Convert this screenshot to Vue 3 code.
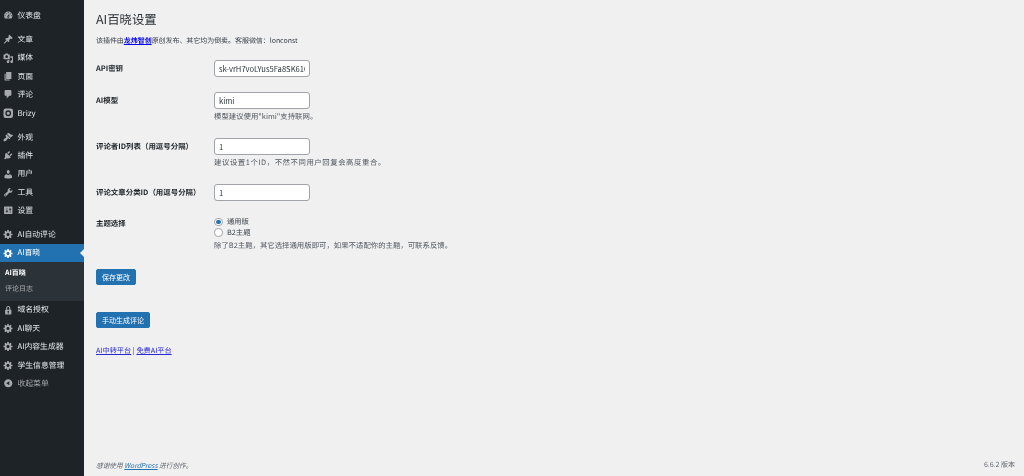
<script setup>
const ICONS = {
  dash: 'M3.76 16h12.48c1.1-1.37 1.76-3.11 1.76-5 0-4.42-3.58-8-8-8s-8 3.58-8 8c0 1.89.66 3.63 1.76 5zM10 4c.55 0 1 .45 1 1s-.45 1-1 1-1-.45-1-1 .45-1 1-1zM6 6c.55 0 1 .45 1 1s-.45 1-1 1-1-.45-1-1 .45-1 1-1zm8 0c.55 0 1 .45 1 1s-.45 1-1 1-1-.45-1-1 .45-1 1-1zm-5.37 5.55L12 7v6c0 1.1-.9 2-2 2s-2-.9-2-2c0-.57.24-1.08.63-1.45zM4 10c.55 0 1 .45 1 1s-.45 1-1 1-1-.45-1-1 .45-1 1-1zm12 0c.55 0 1 .45 1 1s-.45 1-1 1-1-.45-1-1 .45-1 1-1zm-5 3c0-.55-.45-1-1-1s-1 .45-1 1 .45 1 1 1 1-.45 1-1z',
  pin: 'M10.44 3.02l1.82-1.82 6.36 6.35-1.83 1.82c-1.05-.68-2.48-.57-3.41.36l-.75.75c-.92.93-1.04 2.35-.35 3.41l-1.83 1.82-2.41-2.41-2.8 2.79c-.42.42-3.38 2.71-3.8 2.29s1.86-3.39 2.28-3.81l2.79-2.79L4.1 9.36l1.83-1.82c1.05.69 2.48.57 3.4-.36l.75-.75c.93-.92 1.05-2.35.36-3.41z',
  media: 'M13 11V4c0-.55-.45-1-1-1h-1.67L9 1H5L3.67 3H2c-.55 0-1 .45-1 1v7c0 .55.45 1 1 1h10c.55 0 1-.45 1-1zM7 4.5c1.38 0 2.5 1.12 2.5 2.5S8.38 9.5 7 9.5 4.5 8.38 4.5 7 5.62 4.5 7 4.5zM14 6h5v10.5c0 1.38-1.12 2.5-2.5 2.5S14 17.88 14 16.5s1.12-2.5 2.5-2.5c.17 0 .34.02.5.05V9h-3V6zm-4 8.05V13h2v3.5c0 1.38-1.12 2.5-2.5 2.5S7 17.88 7 16.5 8.12 14 9.5 14c.17 0 .34.02.5.05z',
  page: 'M6 15V2h10v13H6zm-1 1h8v2H3V5h2v11z',
  comment: 'M5 2h9c1.1 0 2 .9 2 2v7c0 1.1-.9 2-2 2h-2l-5 5v-5H5c-1.1 0-2-.9-2-2V4c0-1.1.9-2 2-2z',
  brizy: 'M5 1h10a4 4 0 0 1 4 4v10a4 4 0 0 1-4 4H5a4 4 0 0 1-4-4V5a4 4 0 0 1 4-4zm5 3.5a5.5 5.5 0 1 0 0 11 5.5 5.5 0 0 0 0-11zM10 7a3 3 0 1 1 0 6 3 3 0 0 1 0-6z',
  brush: 'M14.48 11.06L7.41 3.99l1.5-1.5c.5-.56 2.3-.47 3.51.32 1.21.8 1.43 1.28 2.91 2.1 1.18.64 2.45 1.26 4.45.85zm-.71.71L6.7 4.7 4.93 6.47c-.39.39-.39 1.02 0 1.41l1.06 1.06c.39.39.39 1.03 0 1.42-.6.6-1.43 1.11-2.21 1.69-.35.26-.7.53-1.01.84C1.43 13.23.2 15.78 1.5 17.08s3.85-.14 5.19-1.48c.31-.31.58-.66.84-1.01.58-.78 1.09-1.61 1.69-2.21.39-.39 1.03-.39 1.42 0l1.06 1.06c.39.39 1.02.39 1.41 0z',
  plugin: 'M13.11 4.36L9.87 7.6 8 5.73l3.24-3.24c.35-.34 1.05-.2 1.56.32.52.51.66 1.21.31 1.55zm-8 1.77l.91-1.12 9.01 9.01-1.19.84c-.71.71-2.63 1.16-3.82 1.16H6.14L4.9 17.26c-.59.59-1.54.59-2.12 0-.59-.58-.59-1.53 0-2.12l1.24-1.24v-3.88c0-1.13.4-3.19 1.09-3.89zm7.26 3.97l3.24-3.24c.34-.35 1.04-.21 1.55.31.52.51.66 1.21.31 1.55l-3.24 3.25z',
  user: 'M10 9.25c-2.27 0-2.73-3.44-2.73-3.44C7 4.02 7.82 2 9.97 2c2.16 0 2.98 2.02 2.71 3.81 0 0-.41 3.44-2.68 3.44zm0 2.57L12.72 10c2.39 0 4.52 2.33 4.52 4.53v2.49s-3.65 1.13-7.24 1.13c-3.65 0-7.24-1.13-7.24-1.13v-2.49c0-2.25 1.94-4.48 4.47-4.48z',
  tool: 'M16.68 9.77c-1.34 1.34-3.3 1.67-4.95.99l-5.41 6.52c-.99.99-2.59.99-3.58 0s-.99-2.59 0-3.57l6.52-5.42c-.68-1.65-.35-3.61.99-4.95 1.28-1.28 3.12-1.62 4.72-1.06l-2.89 2.89 2.82 2.82 2.86-2.87c.53 1.58.18 3.39-1.08 4.65zM3.81 16.21c.4.39 1.04.39 1.43 0 .4-.4.4-1.04 0-1.43-.39-.4-1.03-.4-1.43 0-.39.39-.39 1.03 0 1.43z',
  settings: 'M18 16V4c0-.55-.45-1-1-1H3c-.55 0-1 .45-1 1v12c0 .55.45 1 1 1h14c.55 0 1-.45 1-1zM8 11h1c.55 0 1 .45 1 1s-.45 1-1 1H8v1.5c0 .28-.22.5-.5.5s-.5-.22-.5-.5V13H6c-.55 0-1-.45-1-1s.45-1 1-1h1V5.5c0-.28.22-.5.5-.5s.5.22.5.5V11zm5-2h-1c-.55 0-1-.45-1-1s.45-1 1-1h1V5.5c0-.28.22-.5.5-.5s.5.22.5.5V7h1c.55 0 1 .45 1 1s-.45 1-1 1h-1v5.5c0 .28-.22.5-.5.5s-.5-.22-.5-.5V9z',
  gear: 'M18 12h-2.18c-.17.7-.44 1.35-.81 1.93l1.54 1.54-2.1 2.1-1.54-1.54c-.58.36-1.23.63-1.91.79V19H8v-2.18c-.68-.16-1.33-.43-1.91-.79l-1.54 1.54-2.12-2.12 1.54-1.54c-.36-.58-.63-1.23-.79-1.91H1V9.03h2.17c.16-.7.44-1.35.8-1.94L2.43 5.55l2.1-2.1 1.54 1.54c.58-.37 1.24-.64 1.93-.81V2h3v2.18c.68.16 1.33.43 1.91.79l1.54-1.54 2.12 2.12-1.54 1.54c.36.59.64 1.24.8 1.94H18V12zm-8.5 1.5c1.66 0 3-1.34 3-3s-1.34-3-3-3-3 1.34-3 3 1.34 3 3 3z',
  lock: 'M14 9h1c.55 0 1 .45 1 1v7c0 .55-.45 1-1 1H5c-.55 0-1-.45-1-1v-7c0-.55.45-1 1-1h1V6c0-2.21 1.79-4 4-4s4 1.79 4 4v3zm-2 0V6c0-1.1-.9-2-2-2s-2 .9-2 2v3h4zm-1 7l-.36-2.15c.51-.24.86-.75.86-1.35 0-.83-.67-1.5-1.5-1.5s-1.5.67-1.5 1.5c0 .6.35 1.11.86 1.35L9 16h2z',
  collapse: 'M10 2.16c4.33 0 7.84 3.51 7.84 7.84s-3.51 7.84-7.84 7.84S2.16 14.33 2.16 10 5.71 2.16 10 2.16zm2 11.72V6.12L6.18 9.97z'
}
const menuTop = [
  { t: '仪表盘', i: 'dash' },
  { t: '文章', i: 'pin', gap: true },
  { t: '媒体', i: 'media' },
  { t: '页面', i: 'page' },
  { t: '评论', i: 'comment' },
  { t: 'Brizy', i: 'brizy' },
  { t: '外观', i: 'brush', gap: true },
  { t: '插件', i: 'plugin' },
  { t: '用户', i: 'user' },
  { t: '工具', i: 'tool' },
  { t: '设置', i: 'settings' },
  { t: 'AI自动评论', i: 'gear', gap: true },
  { t: 'AI百晓', i: 'gear', current: true }
]
const menuBottom = [
  { t: '域名授权', i: 'lock' },
  { t: 'AI聊天', i: 'gear' },
  { t: 'AI内容生成器', i: 'gear' },
  { t: '学生信息管理', i: 'gear' },
  { t: '收起菜单', i: 'collapse', dim: true }
]
</script>

<template>
  <div class="page">
    <aside class="side">
      <div v-for="m in menuTop" :key="m.t" class="item" :class="{ gap: m.gap, current: m.current }">
        <svg class="ico" viewBox="0 0 20 20"><path fill-rule="evenodd" :d="ICONS[m.i]" /></svg>
        <span>{{ m.t }}</span>
      </div>
      <div class="sub">
        <div class="sub-item on">AI百晓</div>
        <div class="sub-item">评论日志</div>
      </div>
      <div v-for="m in menuBottom" :key="m.t" class="item" :class="{ dim: m.dim }">
        <svg class="ico" viewBox="0 0 20 20"><path fill-rule="evenodd" :d="ICONS[m.i]" /></svg>
        <span>{{ m.t }}</span>
      </div>
    </aside>

    <main class="main">
      <h1 class="title">AI百晓设置</h1>
      <p class="intro">该插件由<a class="strong-link" href="#">龙炜智创</a>原创发布、其它均为倒卖。客服微信：lonconst</p>

      <div class="row row-api">
        <label class="lab">API密钥</label>
        <div class="field"><input class="inp" value="sk-vrH7voLYus5Fa8SK610S3D" readonly /></div>
      </div>
      <div class="row row-model">
        <label class="lab">AI模型</label>
        <div class="field">
          <input class="inp" value="kimi" readonly />
          <p class="desc">模型建议使用"kimi"支持联网。</p>
        </div>
      </div>
      <div class="row row-ids">
        <label class="lab">评论者ID列表（用逗号分隔）</label>
        <div class="field">
          <input class="inp" value="1" readonly />
          <p class="desc desc-ids">建议设置1个ID，不然不同用户回复会高度重合。</p>
        </div>
      </div>
      <div class="row row-cat">
        <label class="lab">评论文章分类ID（用逗号分隔）</label>
        <div class="field"><input class="inp" value="1" readonly /></div>
      </div>
      <div class="row row-theme">
        <label class="lab">主题选择</label>
        <div class="field">
          <div class="radio-line"><span class="radio checked"></span>通用版</div>
          <div class="radio-line"><span class="radio"></span>B2主题</div>
          <p class="desc">除了B2主题，其它选择通用版即可，如果不适配你的主题，可联系反馈。</p>
        </div>
      </div>

      <button class="btn btn-save">保存更改</button>
      <button class="btn btn-gen">手动生成评论</button>

      <p class="links"><a href="#">AI中转平台</a> | <a href="#">免费AI平台</a></p>

      <footer class="foot">
        <span class="thanks">感谢使用 <a href="#">WordPress</a> 进行创作。</span>
        <span>6.6.2 版本</span>
      </footer>
    </main>
  </div>
</template>

<style>
html, body { margin: 0; background: #f0f0f1; }
</style>

<style scoped>
.page {
  display: flex;
  height: 476px;
  overflow: hidden;
  font-family: "Noto Sans CJK SC", "Liberation Sans", sans-serif;
  font-size: 7px;
  color: #3c434a;
  background: #f0f0f1;
  text-rendering: geometricPrecision;
  filter: blur(0.2px);
}
.side {
  width: 84px;
  flex: none;
  background: #1d2327;
  padding-top: 6.3px;
  box-sizing: border-box;
}
.item {
  position: relative;
  display: flex;
  align-items: center;
  height: 18.4px;
  color: #e4e9ee;
  font-size: 7.8px;
}
.item.gap { margin-top: 5.6px; }
.item.dim { color: #a7aaad; }
.ico {
  width: 10.5px;
  height: 10.5px;
  margin: 0 4px 0 3px;
  fill: #a7aaad;
  flex: none;
}
.item.current {
  background: #2271b1;
  color: #fff;
}
.item.current .ico { fill: #fff; }
.item.current::after {
  content: "";
  position: absolute;
  right: 0;
  top: 50%;
  margin-top: -4px;
  border: 4px solid transparent;
  border-right-color: #f0f0f1;
  border-left-width: 0;
}
.sub {
  background: #2c3338;
  padding: 4px 0 3.5px;
}
.sub-item {
  height: 15.5px;
  line-height: 15.5px;
  padding-left: 5px;
  color: #a7aaad;
}
.sub-item.on { color: #fff; font-weight: 700; }
.main {
  flex: 1;
  min-width: 0;
  display: flex;
  flex-direction: column;
  align-items: flex-start;
  padding: 0 9px 0 12px;
}
.title {
  margin: 11px 0 0;
  font-size: 12.4px;
  line-height: 16px;
  font-weight: 400;
  color: #2c3338;
}
.intro {
  margin: 7.5px 0 0;
  line-height: 12px;
  letter-spacing: -0.05px;
}
.strong-link { color: #0000ee; font-weight: 700; text-decoration: underline; }
.row { display: flex; align-items: flex-start; }
.row-api { margin-top: 13.5px; }
.row-model { margin-top: 15.5px; }
.row-ids { margin-top: 15.5px; }
.row-cat { margin-top: 15.5px; }
.row-theme { margin-top: 16.5px; }
.lab {
  width: 118px;
  flex: none;
  font-size: 7.45px;
  font-weight: 700;
  color: #1d2327;
  line-height: 12px;
  padding-top: 2.5px;
}
.row-theme .lab { padding-top: 1px; }
.inp {
  display: block;
  width: 95.5px;
  height: 16.5px;
  box-sizing: border-box;
  padding: 0 4px;
  border: 1px solid #a0a3a8;
  border-radius: 3px;
  background: #fff;
  color: #2c3338;
  font: inherit;
  font-size: 7.6px;
  outline: none;
}
.desc {
  margin: 2px 0 0;
  font-size: 7.4px;
  line-height: 12px;
  color: #50575e;
  white-space: nowrap;
}
.desc-ids { letter-spacing: 0.55px; }
.radio-line {
  display: flex;
  align-items: center;
  height: 10.4px;
  font-size: 7.3px;
  color: #3c434a;
}
.radio {
  width: 8.5px;
  height: 8.5px;
  margin-right: 4.5px;
  box-sizing: border-box;
  border: 1px solid #a0a3a8;
  border-radius: 50%;
  background: #fff;
  display: flex;
  align-items: center;
  justify-content: center;
}
.radio.checked::before {
  content: "";
  width: 4.5px;
  height: 4.5px;
  border-radius: 50%;
  background: #2271b1;
}
.btn {
  height: 16.5px;
  padding: 0 5px;
  border: 1px solid #2271b1;
  border-radius: 2px;
  background: #2271b1;
  color: #fff;
  font: inherit;
  line-height: 14.5px;
}
.btn-save { margin-top: 17px; }
.btn-gen { margin-top: 26.5px; }
.links {
  margin: 17px 0 0;
  font-size: 7.2px;
  line-height: 12px;
  color: #3c434a;
}
.links a { color: #2a2ad0; text-decoration: underline; }
.foot {
  margin-top: auto;
  align-self: stretch;
  display: flex;
  justify-content: space-between;
  padding-bottom: 5px;
  line-height: 12px;
  color: #646970;
}
.thanks { font-style: italic; font-size: 6.7px; }
.thanks a { color: #2271b1; text-decoration: underline; }
</style>
